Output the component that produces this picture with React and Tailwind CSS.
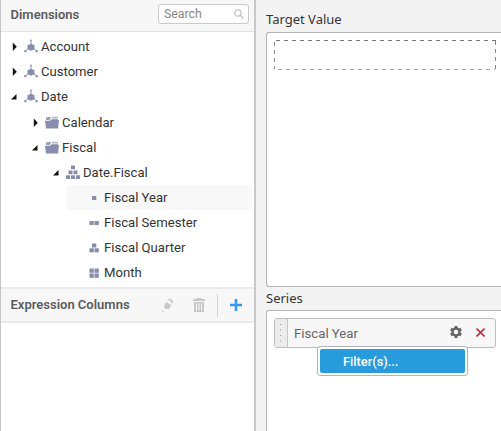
const C = "#888dae";

function Arrow({ open }) {
  return (
    <svg width="8" height="10" viewBox="0 0 8 10" className="shrink-0">
      {open ? <path d="M6.500 2V7.600H1Z" fill="#111" /> : <path d="M2.800 .6V9L6.800 4.800Z" fill="#111" />}
    </svg>
  );
}

function Cube() {
  return (
    <svg width="14" height="14" viewBox="0 0 14 14" className="shrink-0" fill={C}>
      <path d="M6.500 1h1v4h-1zM5.700 1.800L7 .2l1.300 1.600zM7 4.700l3.500 1.500v4L7 11.700 3.500 10.200v-4z" />
      <path d="M4 9.700L1.400 12M10 9.700l2.600 2.300" stroke={C} strokeWidth="1" />
      <path d="M.3 11h1.300l1.200 2.300H.3zM13.700 11h-1.300l-1.200 2.300h2.500z" />
    </svg>
  );
}

function Folder() {
  return (
    <svg width="14" height="13" viewBox="0 0 14 13" className="shrink-0" fill={C}>
      <path d="M1 1.500L5 .8 6 2 4.500 4H1z" opacity=".85" />
      <path d="M6.500 .8h6.500v1.400H7z" opacity=".6" />
      <path d="M7 2.800h6V5H5z" opacity=".8" />
      <path d="M0 4.800h5L6.500 4h7.500l-.9 8.500H1z" />
    </svg>
  );
}

function Blocks({ kind }) {
  const shapes = {
    hierarchy: [[5, 0.500, 4, 3.700], [2.500, 5.500, 4, 3.700], [7.500, 5.500, 4, 3.700], [0, 10.300, 4, 3.700], [5, 10.300, 4, 3.700], [10, 10.300, 4, 3.700]],
    one: [[5, 5, 4.300, 4]],
    two: [[2.500, 5, 4.300, 4], [7.500, 5, 4.300, 4]],
    three: [[5, 2.500, 4.300, 4], [2.500, 7.300, 4.300, 4], [7.500, 7.300, 4.300, 4]],
    four: [[2.500, 2.500, 4.300, 4.300], [7.500, 2.500, 4.300, 4.300], [2.500, 7.500, 4.300, 4.300], [7.500, 7.500, 4.300, 4.300]],
  };
  return (
    <svg width="14" height="14" viewBox="0 0 14 14" className="shrink-0" fill={C}>
      {shapes[kind].map(([x, y, w, h]) => (
        <rect key={x + "-" + y} x={x} y={y} width={w} height={h} />
      ))}
    </svg>
  );
}

function Row({ pad, open, icon, children }) {
  return (
    <div className={"flex h-[25px] items-center " + pad}>
      <Arrow open={open} />
      <div className="ml-[6px] flex items-center gap-[3px]">
        {icon}
        <span className="pt-px">{children}</span>
      </div>
    </div>
  );
}

function Leaf({ kind, active, children }) {
  return (
    <div className={"ml-[66px] mr-[2px] flex h-[25px] items-center gap-[3px] rounded-sm pl-5 " + (active ? "bg-[#f8f8f8]" : "")}>
      <Blocks kind={kind} />
      <span className="pt-px">{children}</span>
    </div>
  );
}

function LeftPanel() {
  return (
    <div className="flex w-[256px] shrink-0 flex-col border-l border-r-2 border-l-[#c4c4c4] border-r-[#c8c8c8] bg-white">
      <div className="flex h-8 shrink-0 items-center justify-between border-b border-[#e4e4e4] bg-[#f7f7f7] pb-[3px] pl-[9.500px] pr-[5px]">
        <span className="pt-[2px] text-[13px] font-semibold text-[#5c5c5c]">Dimensions</span>
        <div className="flex h-5 w-[91px] items-center justify-between rounded-[3px] border border-[#cacaca] bg-white pl-[5px] pr-1">
          <span className="text-[12.300px] text-[#888]">Search</span>
          <svg width="10" height="10" viewBox="0 0 10 10" fill="none" stroke="#c4c4c4" strokeWidth="1.300">
            <circle cx="4" cy="4" r="3.200" />
            <path d="M6.400 6.400L9.500 9.500" />
          </svg>
        </div>
      </div>
      <div className="h-[255px] shrink-0 pt-[2px] text-[13.100px] text-[#333]">
        <Row pad="pl-[9px]" icon={<Cube />}>Account</Row>
        <Row pad="pl-[9px]" icon={<Cube />}>Customer</Row>
        <Row pad="pl-[9px] mb-px" open icon={<Cube />}>Date</Row>
        <Row pad="pl-[30px]" icon={<Folder />}>Calendar</Row>
        <Row pad="pl-[30px]" open icon={<Folder />}>Fiscal</Row>
        <Row pad="pl-[51px]" open icon={<Blocks kind="hierarchy" />}>Date.Fiscal</Row>
        <Leaf kind="one" active>Fiscal Year</Leaf>
        <Leaf kind="two">Fiscal Semester</Leaf>
        <Leaf kind="three">Fiscal Quarter</Leaf>
        <Leaf kind="four">Month</Leaf>
      </div>
      <div className="flex h-[36px] shrink-0 items-center border-b-2 border-t-2 border-[#eaeaea] bg-[#f7f7f7] pl-[9.500px]">
        <span className="w-[151px] text-[13px] font-semibold text-[#5c5c5c]">Expression Columns</span>
        <svg width="12" height="15" viewBox="0 0 12 15" fill="#c8c8c8">
          <path d="M4.500 4l5 3.500L6.500 11 2 10.500l.5-4zM5.500 1.500L8 .5l3 2.500v2l-1 .5L8.500 3zM0 12.200l2 1.500-2 .8z" />
        </svg>
        <svg width="12" height="14" viewBox="0 0 12 14" className="ml-[19px]">
          <path d="M0 1h3.500V0h5v1H12v2H0zM1 4h10v10H1z" fill="#c8c8c8" />
          <path d="M3.500 5.500v7M6 5.500v7M8.500 5.500v7" stroke="#f7f7f7" />
        </svg>
        <div className="ml-[12px] h-[23px] w-px bg-[#d4d4d4]" />
        <svg width="12" height="12" viewBox="0 0 12 12" className="ml-[12px]" fill="#3898f4">
          <path d="M4.700 0h2.600v4.700H12v2.600H7.300V12H4.700V7.300H0V4.700h4.700z" />
        </svg>
      </div>
    </div>
  );
}

const labelFont = "font-['Noto_Sans',sans-serif] text-[13px] text-[#333] leading-[18px]";

function RightPanel() {
  return (
    <div className="flex min-w-0 flex-1 flex-col bg-[#f3f3f3] pl-[10px]">
      <div className={"h-8 shrink-0 pt-[10px] " + labelFont}>Target Value</div>
      <div className="h-[255px] shrink-0 rounded-l-[3px] border border-r-0 border-[#b4b4b4] bg-white pl-[7px] pt-[7px]">
        <svg width="223" height="31" viewBox="0 0 223 31" fill="none">
          <path d="M2 .5H222" stroke="#777" strokeDasharray="4 4" />
          <path d="M4 29.500H221" stroke="#aaa" strokeDasharray="4 4" />
          <path d="M.5 2V29" stroke="#888" strokeDasharray="4 4" />
          <path d="M221.500 1V29" stroke="#888" strokeDasharray="4 4" />
        </svg>
      </div>
      <div className={"h-[23px] shrink-0 pt-[2px] " + labelFont}>Series</div>
      <div className="flex-1 rounded-tl-[3px] border-l border-t border-[#b4b4b4] bg-white pl-[7px] pt-[7px]">
        <div className="relative flex h-[30px] w-[222px] items-center rounded-[3px] border border-[#bdbdbd] bg-[#f7f7f7]">
          <div className="flex h-full w-[13px] items-center justify-center border-r border-[#c6c6c6] bg-[#ececec]">
            <svg width="2" height="20" viewBox="0 0 2 20" fill="#999">
              <path d="M0 1h1v1H0zM0 6.500h1v1H0zM0 12h1v1H0zM0 17.500h1v1H0z" />
            </svg>
          </div>
          <span className="ml-[6px] flex-1 pt-px text-[13.200px] text-[#666]">Fiscal Year</span>
          <svg width="12" height="12" viewBox="0 0 12 12" className="mb-[2px]">
            <g stroke="#666" strokeWidth="3">
              <path d="M6 0v12M.8 3l10.400 6M.8 9l10.400-6" />
            </g>
            <circle cx="6" cy="6" r="4.700" fill="#666" />
            <circle cx="6" cy="6" r="2.300" fill="#f7f7f7" />
          </svg>
          <svg width="9" height="9" viewBox="0 0 9 9" className="mb-px ml-[14px] mr-[10px]">
            <path d="M.5.5l8 8M8.500.5l-8 8" stroke="#d02a36" strokeWidth="1.600" />
          </svg>
          <div className="absolute left-[42px] top-[27px] h-[30px] w-[151px] rounded-[3px] border border-[#b4b4b4] bg-white p-[2px]">
            <div className="flex h-full items-center rounded-[2px] bg-[#279bdc] pl-[23px] pt-px text-[12.800px] font-medium text-white">Filter(s)...</div>
          </div>
        </div>
      </div>
    </div>
  );
}

export default function App() {
  return (
    <div className="flex h-[431px] w-[501px] overflow-hidden bg-white font-['Roboto',sans-serif]">
      <LeftPanel />
      <RightPanel />
    </div>
  );
}
